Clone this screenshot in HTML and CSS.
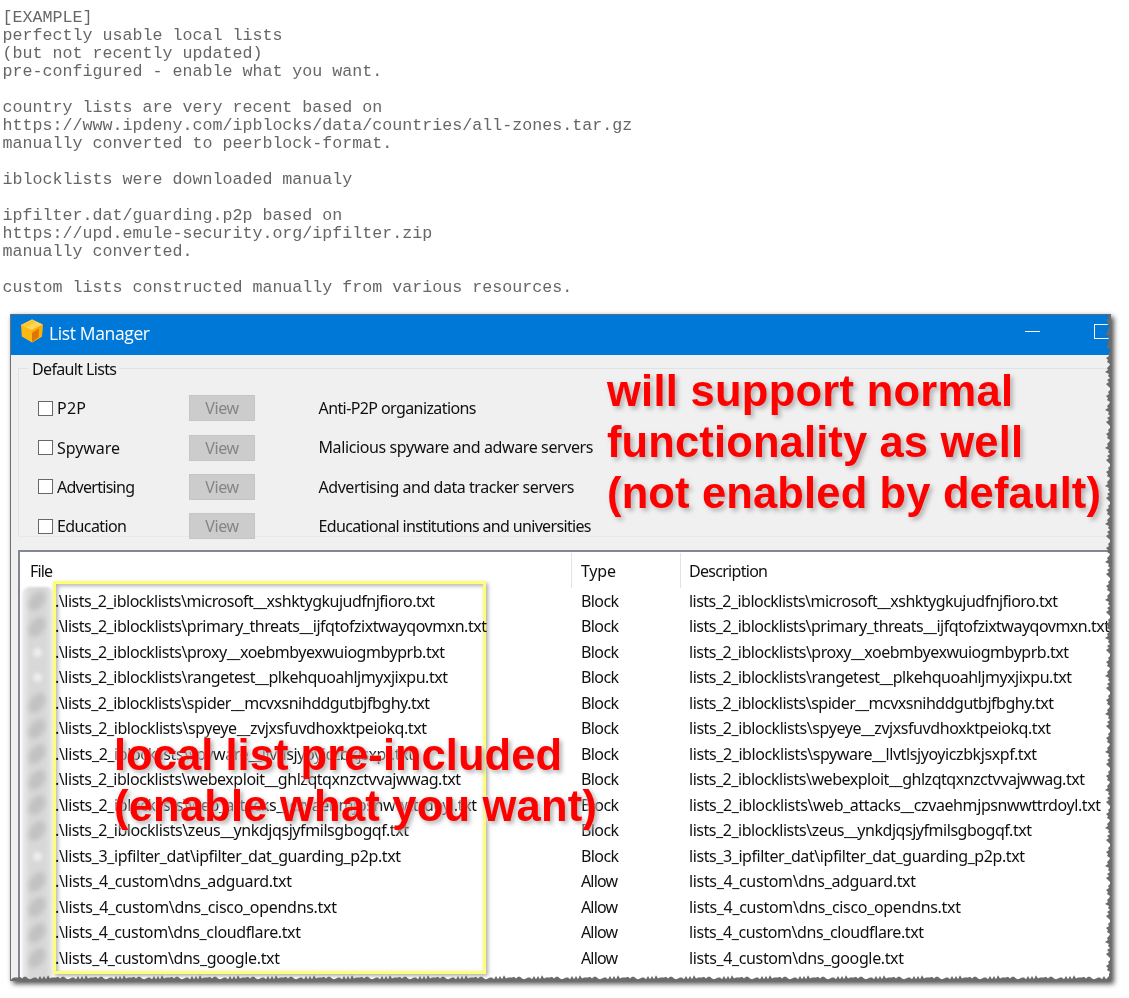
FILE: index.html
```
<!DOCTYPE html>
<html lang="en">
<head>
<meta charset="utf-8">
<title>List Manager</title>
<link rel="stylesheet" href="styles.css">
</head>
<body>
<pre class="notes">[EXAMPLE]
perfectly usable local lists
(but not recently updated)
pre-configured - enable what you want.

country lists are very recent based on
https://www.ipdeny.com/ipblocks/data/countries/all-zones.tar.gz
manually converted to peerblock-format.

iblocklists were downloaded manualy

ipfilter.dat/guarding.p2p based on
https://upd.emule-security.org/ipfilter.zip
manually converted.

custom lists constructed manually from various resources.</pre>
<main class="window">
  <div class="content">
    <header class="titlebar">
      <svg class="logo" width="24" height="24" viewBox="0 0 24 24"><path d="M12 .5 22.7 5.5 22 17.500 12 23.500 1.800 17.500 1 6Z" fill="#fcb813"/><path d="M12 .5 22.7 5.500 12 11 1 6Z" fill="#ffd65a"/><path d="M12 1 16 3 6 8.500 1.500 6Z" fill="#ffc62d"/><path d="M12 11 22.7 5.500 22 17.500 12 23.500Z" fill="#f9ad0b"/><path d="M12 14 19 9.500 18.500 18.500 12 23Z" fill="#df7407"/></svg>
      <span class="title" data-w="100">List Manager</span>
      <span class="minimise"></span><span class="maximise"></span>
    </header>
    <section class="group">
      <h2 class="legend"><span data-w="84">Default Lists</span></h2>
      <div class="option"><i class="check"></i><span class="name"><span data-w="28">P2P</span></span><span class="view"><span data-w="33">View</span></span><span data-w="157">Anti-P2P organizations</span></div>
      <div class="option"><i class="check"></i><span class="name"><span data-w="62">Spyware</span></span><span class="view"><span data-w="33">View</span></span><span class="raised" data-w="274">Malicious spyware and adware servers</span></div>
      <div class="option"><i class="check"></i><span class="name"><span data-w="77">Advertising</span></span><span class="view"><span data-w="33">View</span></span><span data-w="255">Advertising and data tracker servers</span></div>
      <div class="option"><i class="check"></i><span class="name"><span data-w="69">Education</span></span><span class="view"><span data-w="33">View</span></span><span data-w="272">Educational institutions and universities</span></div>
    </section>
    <section class="list">
      <div class="head"><span class="h-file"><span data-w="22">File</span></span><span class="h-type"><span data-w="34">Type</span></span><span class="h-desc"><span data-w="78">Description</span></span></div>
      <div class="rows" id="rows"></div>
      <div class="smudge" id="smudge"></div>
      <div class="marker"></div>
    </section>
    <div class="callout upper"><div><span data-w="405">will support normal</span></div><div><span data-w="415">functionality as well</span></div><div><span data-w="493">(not enabled by default)</span></div></div>
    <div class="callout lower"><div><span data-w="447">local list pre-included</span></div><div><span data-w="482">(enable what you want)</span></div></div>
    <svg class="tear" width="1101" height="667" viewBox="0 0 1101 667"><path id="tear" fill="#6b6b6b"/></svg>
  </div>
</main>
<script src="script.js"></script>
</body>
</html>
```
FILE: styles.css
```
* { box-sizing: border-box; }
body { margin: 0; background: #fff; width: 1129px; height: 998px; overflow: hidden; }
.notes { margin: 0; padding: 9px 0 0 2.500px; height: 314px; font: 16.67px/18px "Liberation Mono", "Courier New", monospace; color: #666; }
.window { width: 1101px; height: 667px; margin-left: 10px; box-shadow: 3px 3px 5px rgba(0,0,0,.65), 0 0 4px rgba(0,0,0,.12); }
.content { position: relative; overflow: hidden; width: 1101px; height: 667px; background: #f0f0f0; border-left: 1px solid #707070; border-top: 1px solid #5d6b78; font: 16px/20px "Noto Sans", "DejaVu Sans", sans-serif; color: #101010; }
[data-w] { display: inline-block; white-space: pre; }
.titlebar { display: flex; align-items: center; height: 40px; background: #0078d7; color: #fff; padding-left: 9px; }
.logo { margin-top: -8px; }
.title { font: 17.500px/24px "Open Sans", "Noto Sans", sans-serif; margin-left: 5px; margin-top: -5px; }
.minimise { width: 15px; height: 1px; background: #fff; margin: -7px 54px 0 auto; }
.maximise { width: 17px; height: 15px; border: 1px solid #fff; margin-top: -7px; flex: none; }
.group { margin: 13px 0 0 7px; height: 169px; border: 1px solid #e2e2e2; border-right: 0; border-bottom-color: #e8e8e8; }
.legend { width: 91px; margin: -10px 0 0 9px; padding-left: 4px; height: 20px; background: #f0f0f0; font: inherit; }
.option { display: flex; align-items: center; height: 39.400px; padding-left: 19px; }
.legend + .option { margin-top: 9.500px; }
.check { width: 15px; height: 15px; background: #fff; border: 1px solid #686868; margin-right: 4px; }
.name { width: 132px; }
.view { width: 66px; height: 26px; margin-right: 63.500px; padding-top: 3px; background: #ccc; border: 1px solid #c5c5c5; color: #858585; text-align: center; line-height: 19px; }
.raised { margin-top: -2px; }
.list { position: relative; margin: 13px 0 0 7px; height: 440px; background: #fff; border: 1px solid #828790; border-left-width: 2px; border-top-width: 2px; border-right: 0; }
.head { display: grid; grid-template-columns: 552px 109px 1fr; height: 36px; padding-top: 1px; }
.head > span { padding-top: 8px; border-right: 1px solid #e3e3e3; }
.head .h-file { padding-left: 10px; }
.head .h-type { padding-left: 9px; }
.head .h-desc { padding-left: 8px; border: 0; }
.row { display: grid; grid-template-columns: 526px 108px 1fr; height: 25.530px; padding-left: 35px; align-items: center; }
.smudge { position: absolute; left: 2px; top: 35px; width: 30px; height: 402px; background: linear-gradient(90deg,#ededed,#d8d8d8 8px,#d8d8d8 23px,#e4e4e4); border-radius: 8px 5px 0 0; filter: blur(1px); }
.blot { display: flex; align-items: center; justify-content: center; height: 25.530px; padding-top: 3px; }
.blot::before { content: ""; width: 14px; height: 22px; border-radius: 50%; transform: rotate(35deg); background: #c2c2c2; filter: blur(2px); }
.blot.light::before { width: 9px; height: 9px; background: #eee; filter: blur(1.500px); }
.marker { position: absolute; left: 33px; top: 29px; width: 433px; height: 393px; border: 3px solid #ffff76; box-shadow: 2px 2px 4px rgba(0,0,0,.32), inset 2px 2px 4px rgba(0,0,0,.3); mix-blend-mode: multiply; }
.callout { position: absolute; font: bold 43.500px/51px "Liberation Sans", Arial, sans-serif; color: #f00; text-shadow: 3px 3px 4px rgba(80,80,80,.35), 0 0 4px #eee, 1px 1px 5px rgba(235,235,235,.9); }
.upper { left: 596px; top: 51px; }
.lower { left: 103px; top: 415px; }
.tear { position: absolute; left: -1px; top: -1px; }
```
FILE: script.js
```
const files = [
  ["2_iblocklists\\microsoft__xshktygkujudfnjfioro", 379, 368],
  ["2_iblocklists\\primary_threats__ijfqtofzixtwayqovmxn", 431, 420],
  ["2_iblocklists\\proxy__xoebmbyexwuiogmbyprb", 389, 379],
  ["2_iblocklists\\rangetest__plkehquoahljmyxjixpu", 392, 382],
  ["2_iblocklists\\spider__mcvxsnihddgutbjfbghy", 374, 364],
  ["2_iblocklists\\spyeye__zvjxsfuvdhoxktpeiokq", 371, 361],
  ["2_iblocklists\\spyware__llvtlsjyoyiczbkjsxpf", 358, 347],
  ["2_iblocklists\\webexploit__ghlzqtqxnzctvvajwwag", 405, 395],
  ["2_iblocklists\\web_attacks__czvaehmjpsnwwttrdoyl", 421, 411],
  ["2_iblocklists\\zeus__ynkdjqsjyfmilsgbogqf", 353, 342],
  ["3_ipfilter_dat\\ipfilter_dat_guarding_p2p", 345, 335],
  ["4_custom\\dns_adguard", 236, 226],
  ["4_custom\\dns_cisco_opendns", 281, 271],
  ["4_custom\\dns_cloudflare", 245, 234],
  ["4_custom\\dns_google", 224, 214]
];
const rows = document.getElementById("rows");
const smudge = document.getElementById("smudge");
files.forEach(([name, fileWidth, descWidth], i) => {
  const row = document.createElement("div");
  row.className = "row";
  const cells = [[".\\lists_" + name + ".txt", fileWidth], [i < 11 ? "Block" : "Allow", i < 11 ? 37 : 36], ["lists_" + name + ".txt", descWidth]];
  cells.forEach(([text, width]) => {
    const cell = document.createElement("div");
    const label = document.createElement("span");
    label.textContent = text;
    label.dataset.w = width;
    cell.append(label);
    row.append(cell);
  });
  rows.append(row);
  const blot = document.createElement("div");
  blot.className = [2, 3, 10].includes(i) ? "blot light" : "blot";
  smudge.append(blot);
});

document.querySelectorAll("[data-w]").forEach(el => {
  const width = el.getBoundingClientRect().width;
  el.style.letterSpacing = (Number(el.dataset.w) + 1 - width) / (el.textContent.length - 1) + "px";
});

// Ragged right and bottom edges.
const depth = [1, 3, 2, 5, 3, 4, 1, 2, 4, 3, 6, 2, 3, 1, 4, 2, 5, 3, 1];
let path = "M1101 0";
for (let y = 0, i = 0; y < 662; y += 2, i++) path += `L${1101 - depth[i % 19]} ${y}`;
path += "L1099 662";
for (let x = 1096, i = 0; x > 0; x -= 2, i++) path += `L${x} ${666 - depth[(i * 3) % 19] * .8}`;
document.getElementById("tear").setAttribute("d", path + "L0 667L1101 667Z");
```
